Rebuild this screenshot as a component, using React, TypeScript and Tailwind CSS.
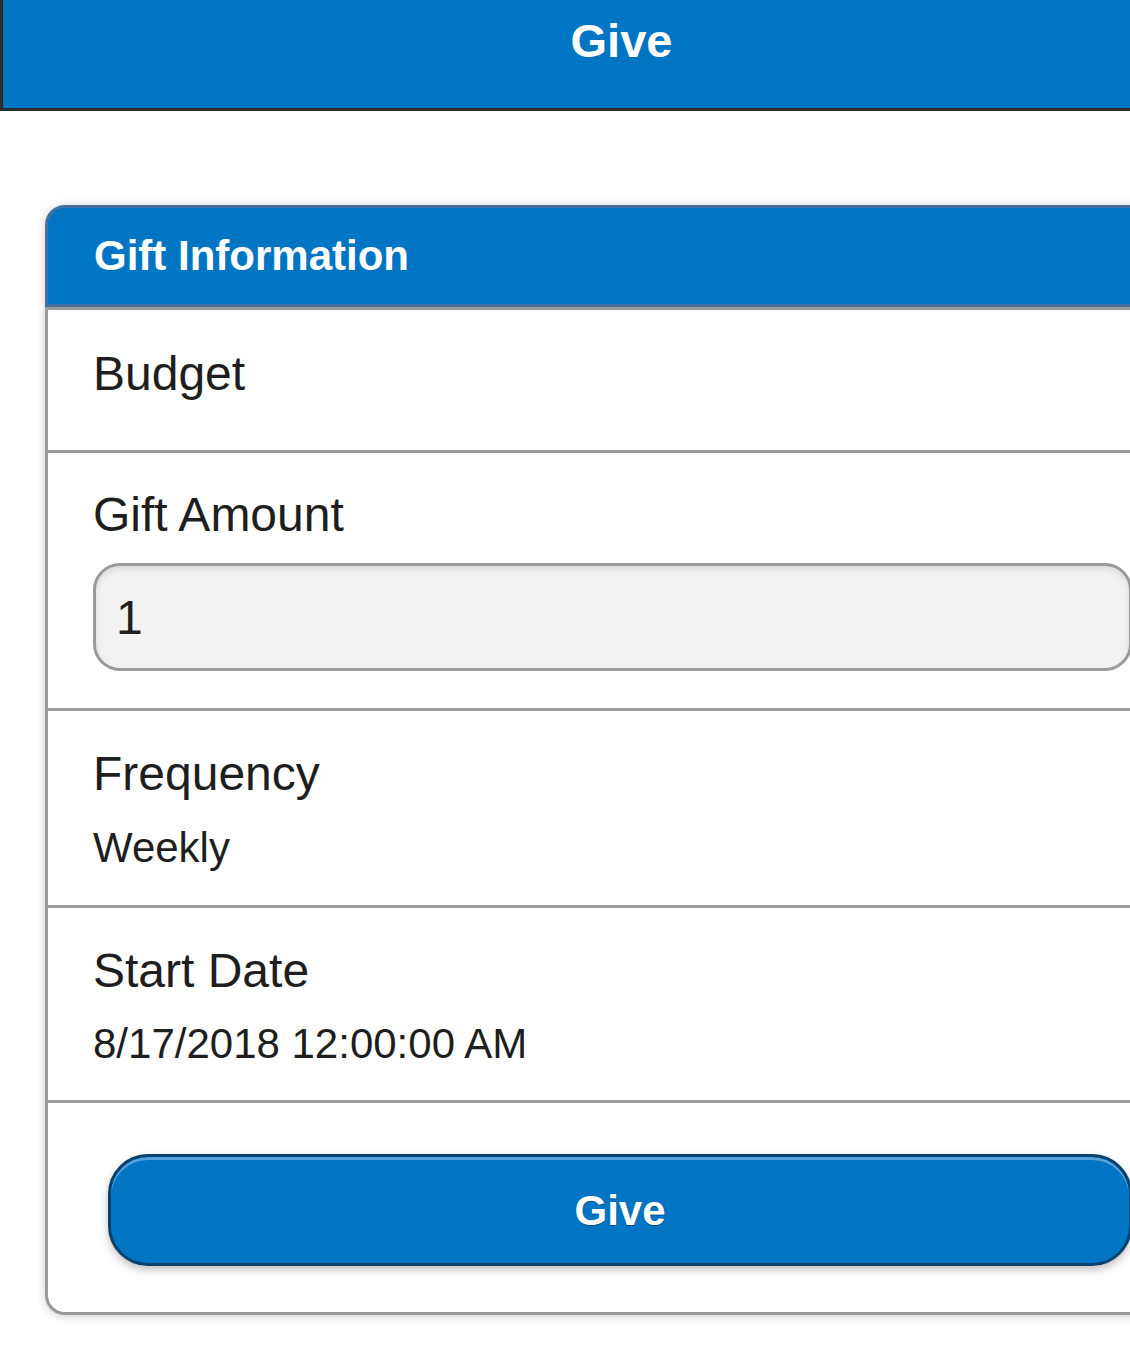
export default function App() {
  const font = { fontFamily: '"Liberation Sans", Arial, sans-serif' };
  return (
    <div className="w-[1130px] h-[1346px] overflow-hidden bg-white" style={font}>
      <div className="w-[1240px]">
        {/* top bar */}
        <div className="h-[111px] bg-[#0075c4] border-l-[3px] border-b-[3px] border-[#2b2b2b] pt-[14px]">
          <h1 className="text-center text-white font-bold text-[47px] leading-[53px]">Give</h1>
        </div>

        <div className="px-[45px] pt-[94px]">
          <div className="rounded-[20px] shadow-[0_1px_10px_rgba(0,0,0,0.2)]">
            <div className="h-[102px] flex items-center rounded-t-[20px] bg-[#0075c4] border-[3px] border-[#43709f] pl-[46px]">
              <h2 className="text-white font-bold text-[42px] leading-[50px]">Gift Information</h2>
            </div>

            <div className="border-[3px] border-t-[3px] border-[#9a9a9a] rounded-b-[20px] bg-white text-[#1e1e1e]">
              <div className="border-b-[3px] border-[#9a9a9a] pl-[45px] pt-[34px] pb-[32px]">
                <div className="text-[48px] leading-[60px] mb-[14px]">Budget</div>
              </div>

              <div className="border-b-[3px] border-[#9a9a9a] pl-[45px] pr-[60px] pt-[32px] pb-[37px]">
                <div className="text-[48px] leading-[60px] mb-[18px]">Gift Amount</div>
                <div className="h-[108px] rounded-[27px] border-[3px] border-[#9a9a9a] bg-[#f2f2f2] shadow-[inset_0_3px_6px_rgba(0,0,0,0.1)] flex items-center pl-[20px]">
                  <span className="text-[48px] leading-[53px]">1</span>
                </div>
              </div>

              <div className="border-b-[3px] border-[#9a9a9a] pl-[45px] pt-[33px] pb-[31px]">
                <div className="text-[48px] leading-[60px] mb-[17px]">Frequency</div>
                <div className="text-[42px] leading-[53px]">Weekly</div>
              </div>

              <div className="border-b-[3px] border-[#9a9a9a] pl-[45px] pt-[33px] pb-[30px]">
                <div className="text-[48px] leading-[60px] mb-[16px]">Start Date</div>
                <div className="text-[42px] leading-[53px]">8/17/2018 12:00:00 AM</div>
              </div>

              <div className="px-[60px] pt-[51px] pb-[46px]">
                <button className="w-full h-[112px] rounded-[40px] border-[3px] border-[#0b426d] bg-[#0075c4] shadow-[inset_0_3px_0_rgba(120,180,230,0.7),0_4px_8px_rgba(0,0,0,0.25)] text-white font-bold text-[42px] [text-shadow:0_1px_1px_rgba(0,40,80,0.5)]">
                  Give
                </button>
              </div>
            </div>
          </div>
        </div>
      </div>
    </div>
  );
}
